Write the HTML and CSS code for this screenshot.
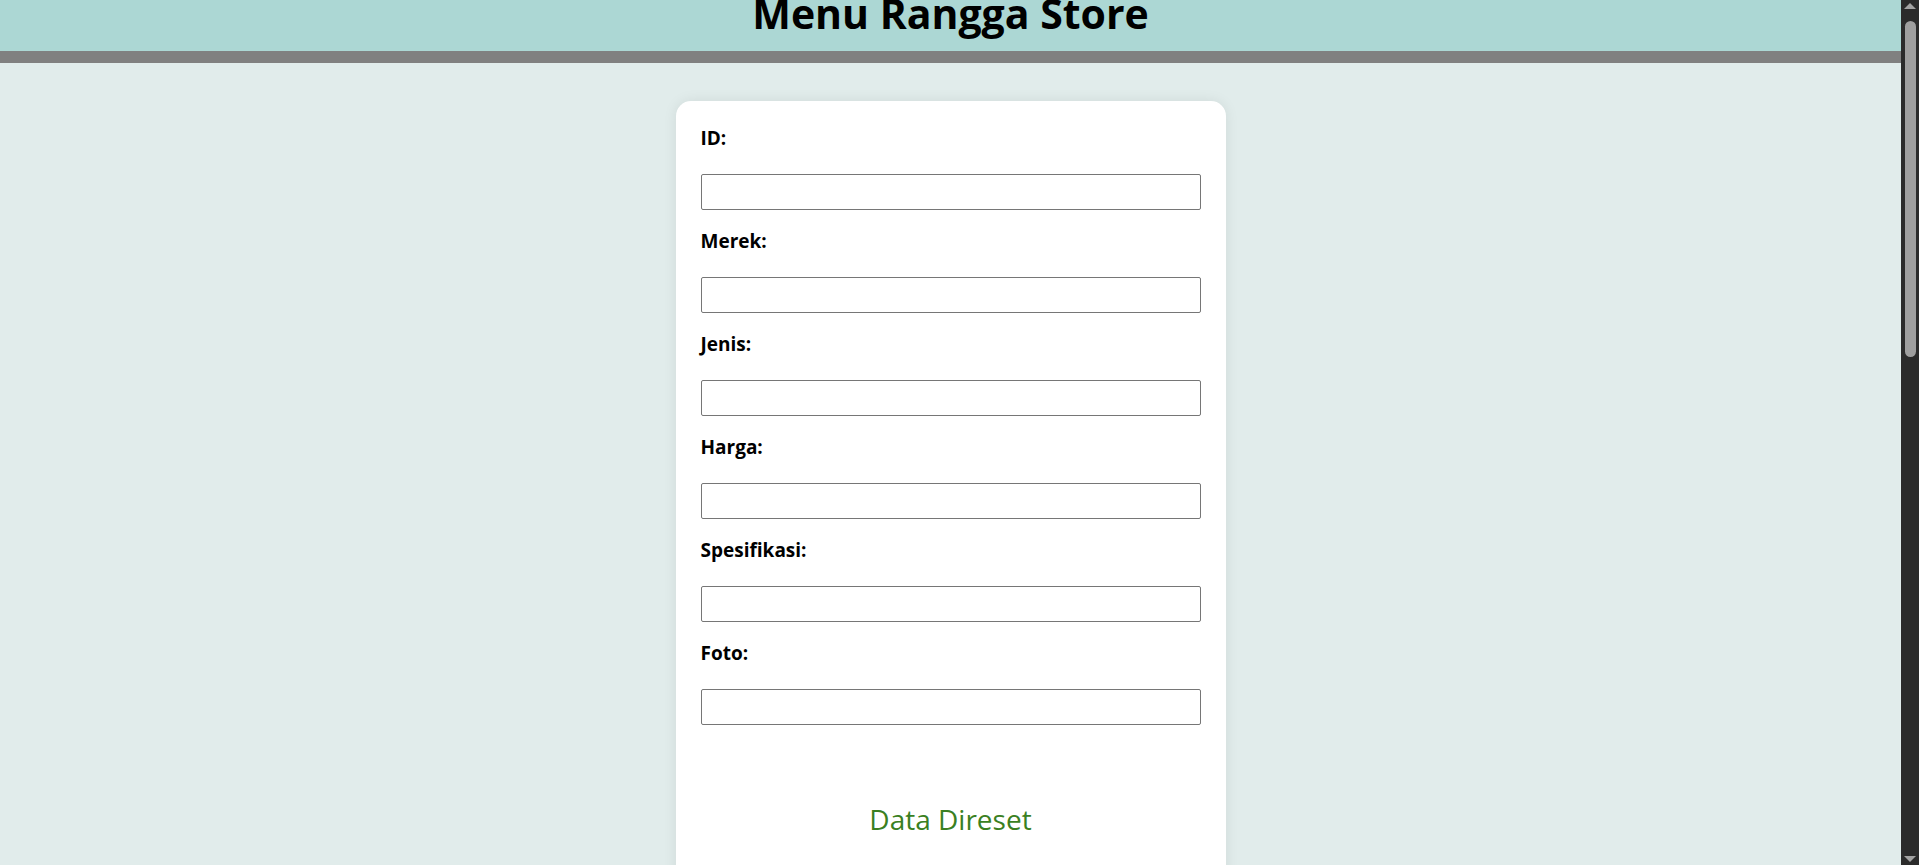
FILE: index.html
```html
<!DOCTYPE html>
<html lang="id">
<head>
    <meta charset="UTF-8">
    <meta name="viewport" content="width=device-width, initial-scale=1.0">
    <title>Menu Rangga Store</title>
    <link rel="stylesheet" href="styles.css">
</head>
<body>
    <header class="header">
        <h1 class="title">Menu Rangga Store</h1>
    </header>

    <main class="content">
        <form class="card" id="formProduk">
            <label class="field-label" for="id">ID:</label>
            <input class="field-input" type="text" id="id" name="id">

            <label class="field-label" for="merek">Merek:</label>
            <input class="field-input" type="text" id="merek" name="merek">

            <label class="field-label" for="jenis">Jenis:</label>
            <input class="field-input" type="text" id="jenis" name="jenis">

            <label class="field-label" for="harga">Harga:</label>
            <input class="field-input" type="text" id="harga" name="harga">

            <label class="field-label" for="spesifikasi">Spesifikasi:</label>
            <input class="field-input" type="text" id="spesifikasi" name="spesifikasi">

            <label class="field-label" for="foto">Foto:</label>
            <input class="field-input" type="text" id="foto" name="foto">

            <p class="message">Data Direset</p>
        </form>
    </main>

    <!-- jalur scrollbar gelap di sisi kanan -->
    <div class="scroll-track">
        <span class="scroll-arrow up"></span>
        <span class="scroll-thumb"></span>
        <span class="scroll-arrow down"></span>
    </div>
</body>
</html>
```

FILE: styles.css
```css
html {
    background-color: #2b2b2b;
}

body {
    margin: 0 18px 0 0;
    min-height: 100vh;
    background-color: #e1eceb;
    font-family: "Open Sans", "Noto Sans", sans-serif;
    color: #000;
}

/* Judul di bagian atas */
.header {
    height: 51px;
    background-color: #acd7d4;
    border-bottom: 12px solid #808080;
    overflow: hidden;
}

.title {
    margin: -7px 0 0;
    font-size: 41px;
    line-height: 41px;
    font-weight: 700;
    text-align: center;
}

.content {
    display: flex;
    justify-content: center;
    padding: 38px 0 40px;
}

/* Kotak form putih */
.card {
    width: 550px;
    box-sizing: border-box;
    padding: 27px 25px 60px;
    background-color: #fff;
    border-radius: 15px;
    box-shadow: 0 0 14px rgba(0, 0, 0, 0.08);
    display: flex;
    flex-direction: column;
}

.field-label {
    display: block;
    font-size: 19px;
    line-height: 20px;
    font-weight: 700;
    margin-bottom: 26px;
}

.field-input {
    display: block;
    width: 100%;
    height: 36px;
    box-sizing: border-box;
    border: 1px solid #767676;
    border-radius: 2px;
    padding: 4px 8px;
    font-family: inherit;
    font-size: 16px;
    margin: 0 0 21px;
}

.field-input:last-of-type {
    margin-bottom: 0;
}

.message {
    margin: 77px 0 0;
    font-size: 28px;
    line-height: 34px;
    color: #3a7f22;
    text-align: center;
}

/* Scrollbar tiruan */
.scroll-track {
    position: fixed;
    top: 0;
    right: 0;
    width: 18px;
    height: 100vh;
    background-color: #2b2b2b;
    display: flex;
    flex-direction: column;
    align-items: center;
    padding: 3px 0;
    box-sizing: border-box;
}

.scroll-arrow {
    width: 0;
    height: 0;
    border-left: 6px solid transparent;
    border-right: 6px solid transparent;
}

.scroll-arrow.up {
    border-bottom: 6px solid #a3a3a3;
}

.scroll-arrow.down {
    margin-top: auto;
    border-top: 6px solid #a3a3a3;
}

.scroll-thumb {
    margin-top: 12px;
    width: 11px;
    height: 336px;
    border-radius: 6px;
    background-color: #9f9f9f;
}
```
